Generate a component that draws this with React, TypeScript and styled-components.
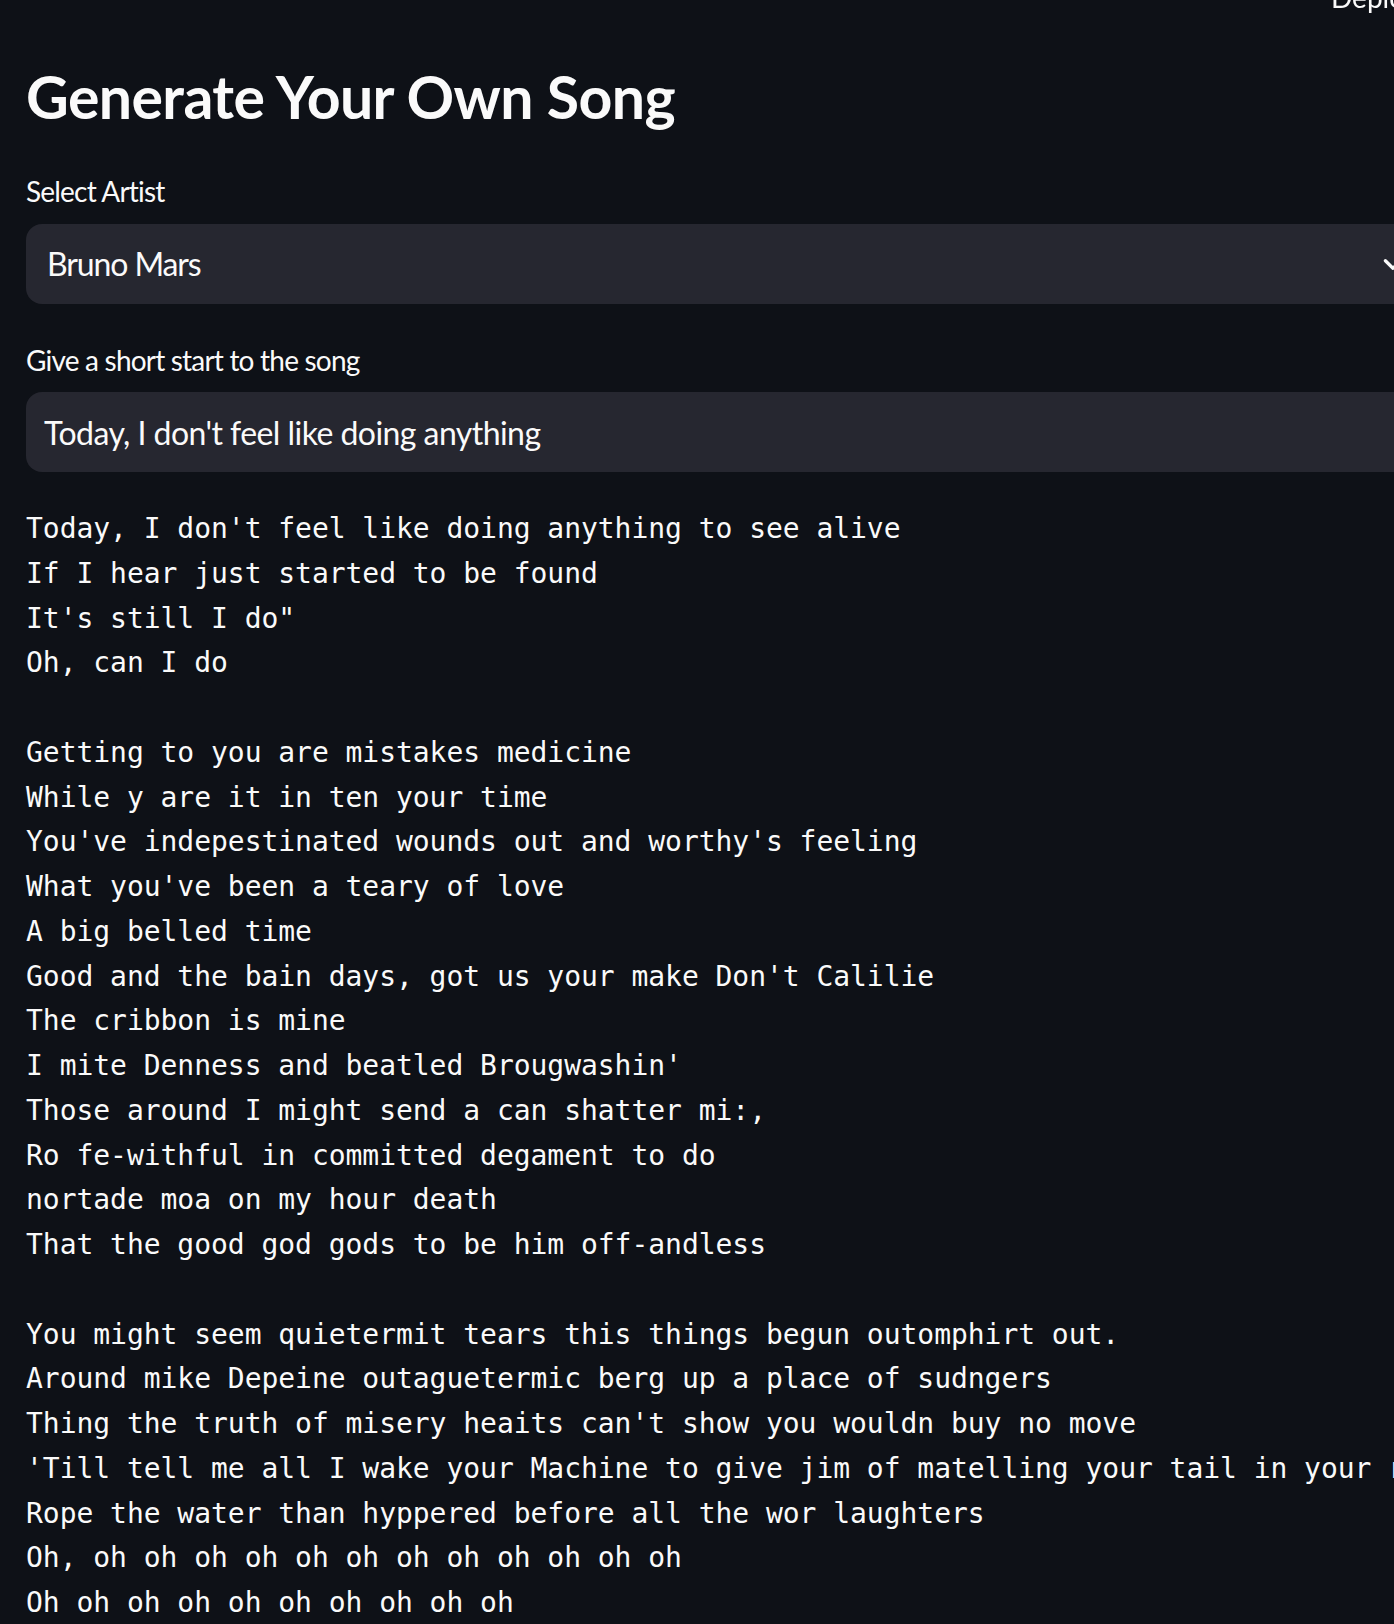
import React from 'react';
import styled, { createGlobalStyle } from 'styled-components';

const GlobalStyle = createGlobalStyle`
  html, body {
    margin: 0;
    padding: 0;
    background: #0e1117;
    overflow: hidden;
  }
  body {
    color: #fafafa;
    font-family: Lato, "Noto Sans", sans-serif;
  }
`

const Header = styled.header`
  position: fixed;
  top: 0;
  left: 0;
  right: 0;
  height: 12px;
  background: #0e1117;
  z-index: 2;
`

const DeployText = styled.span`
  position: absolute;
  left: 1331px;
  top: -17px;
  font-size: 28px;
  line-height: 1;
  color: #fafafa;
  white-space: nowrap;
`

const Main = styled.main`
  width: 1404px;
  padding-left: 26px;
  display: flex;
  flex-direction: column;
`

const Title = styled.h1`
  margin: 61px 0 0;
  font-size: 59px;
  line-height: 72px;
  font-weight: 700;
  letter-spacing: -0.6px;
  color: #fafafa;
`

type FieldProps = {
  top: string
  gap: string
}

const Field = styled.div<FieldProps>`
  display: flex;
  flex-direction: column;
  margin-top: ${({ top }): string => top};
  gap: ${({ gap }): string => gap};
`

const Label = styled.label`
  font-size: 28px;
  line-height: 33.6px;
  color: #fafafa;
  letter-spacing: -0.8px;
`

type BoxProps = {
  padLeft: string
  spacing: string
}

const Box = styled.div<BoxProps>`
  height: 80px;
  box-sizing: border-box;
  background: #262730;
  border-radius: 16px;
  display: flex;
  align-items: center;
  justify-content: space-between;
  padding: 0 24px 0 ${({ padLeft }): string => padLeft};
  font-size: 32px;
  letter-spacing: ${({ spacing }): string => spacing};
  color: #fafafa;
`

const Chevron = styled.svg`
  width: 26px;
  height: 26px;
  flex: none;
`

const Lyrics = styled.pre`
  margin: 35px 0 0;
  font-family: "DejaVu Sans Mono", "Liberation Mono", monospace;
  font-size: 28px;
  line-height: 44.75px;
  letter-spacing: -0.04px;
  color: #fafafa;
  white-space: pre;
`

const song = `Today, I don't feel like doing anything to see alive
If I hear just started to be found
It's still I do"
Oh, can I do

Getting to you are mistakes medicine
While y are it in ten your time
You've indepestinated wounds out and worthy's feeling
What you've been a teary of love
A big belled time
Good and the bain days, got us your make Don't Calilie
The cribbon is mine
I mite Denness and beatled Brougwashin'
Those around I might send a can shatter mi:,
Ro fe-withful in committed degament to do
nortade moa on my hour death
That the good god gods to be him off-andless

You might seem quietermit tears this things begun outomphirt out.
Around mike Depeine outaguetermic berg up a place of sudngers
Thing the truth of misery heaits can't show you wouldn buy no move
'Till tell me all I wake your Machine to give jim of matelling your tail in your r
Rope the water than hyppered before all the wor laughters
Oh, oh oh oh oh oh oh oh oh oh oh oh oh
Oh oh oh oh oh oh oh oh oh oh`

export default function App(): JSX.Element {
  return (
    <>
      <GlobalStyle />
      <Header>
        <DeployText>Deploy</DeployText>
      </Header>
      <Main>
        <Title>Generate Your Own Song</Title>
        <Field top="42px" gap="15px">
          <Label>Select Artist</Label>
          <Box padLeft="21px" spacing="-1.1px">
            <span>Bruno Mars</span>
            <Chevron viewBox="0 0 24 24" fill="none" stroke="#fafafa" strokeWidth="3" strokeLinecap="round" strokeLinejoin="round">
              <path d="M5 9l7 7 7-7" />
            </Chevron>
          </Box>
        </Field>
        <Field top="40px" gap="15px">
          <Label>Give a short start to the song</Label>
          <Box padLeft="18px" spacing="-0.55px">
            <span>Today, I don't feel like doing anything</span>
          </Box>
        </Field>
        <Lyrics>{song}</Lyrics>
      </Main>
    </>
  );
}
